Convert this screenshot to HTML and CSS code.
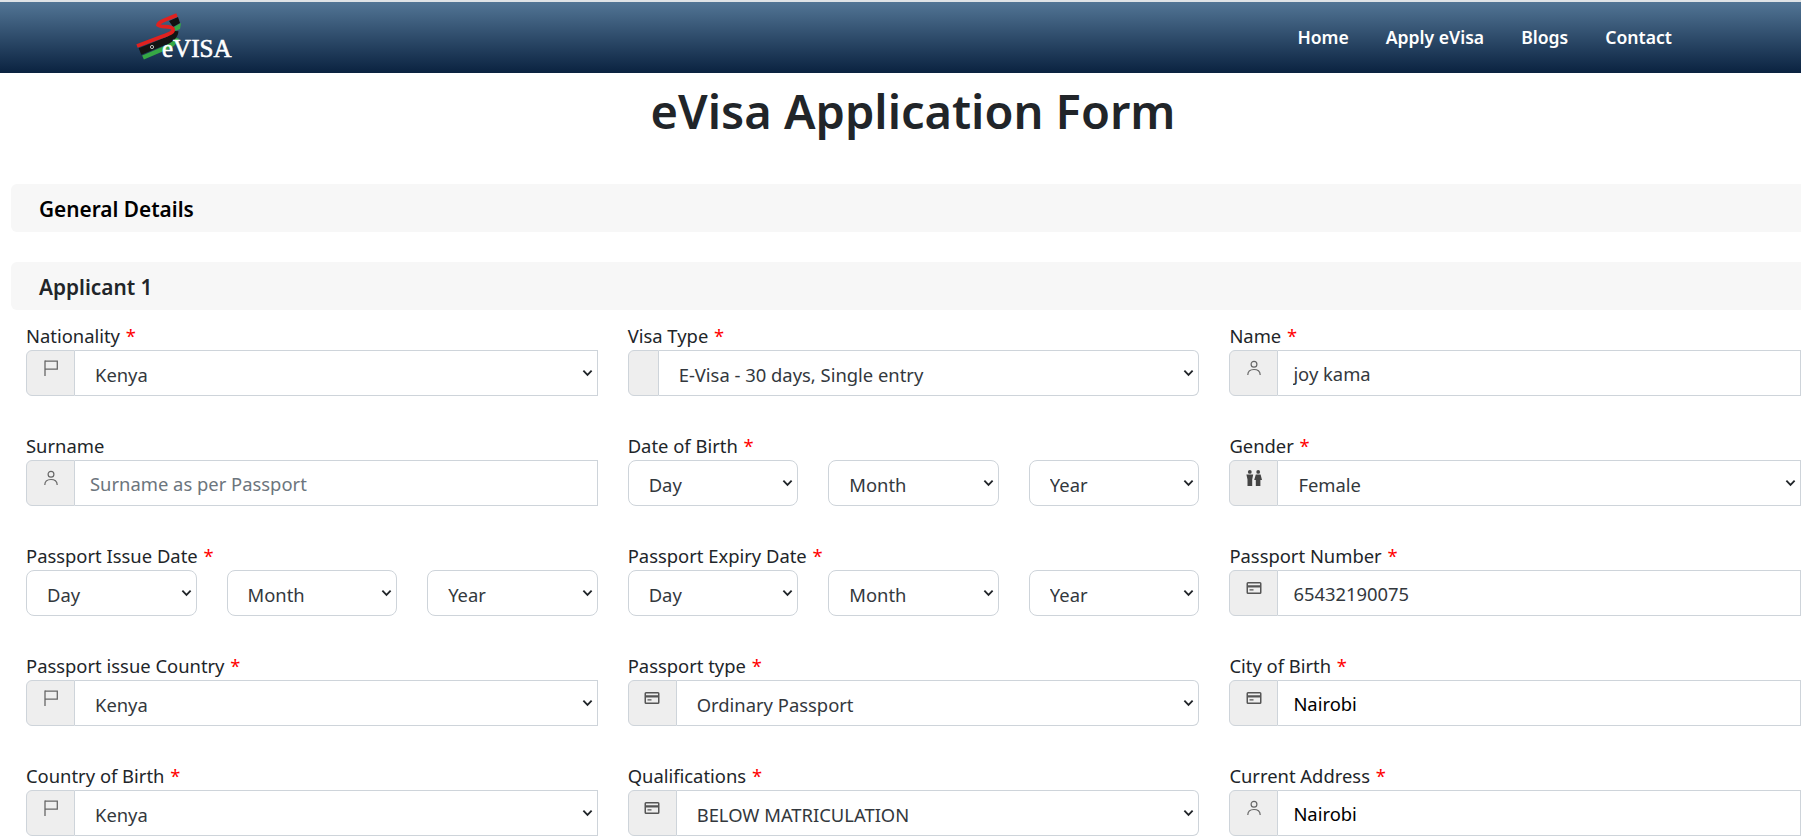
FILE: index.html
```html
<!DOCTYPE html>
<html lang="en">
<head>
<meta charset="utf-8">
<title>eVisa Application Form</title>
<link rel="stylesheet" href="styles.css">
</head>
<body>
<svg class="sprites" width="0" height="0" aria-hidden="true">
  <symbol id="i-flag" viewBox="0 0 16 16"><path d="M2 .5v15.500" fill="none" stroke="#666" stroke-width="1.300"/><path d="M2 1.200h12.300v8h-12.300" fill="none" stroke="#666" stroke-width="1.300"/></symbol>
  <symbol id="i-person" viewBox="0 0 16 16"><circle cx="8" cy="4.200" r="2.900" fill="none" stroke="#666" stroke-width="1.200"/><path d="M1.800 15c0-3.800 2.600-5.500 6.200-5.500s6.200 1.700 6.200 5.500" fill="none" stroke="#666" stroke-width="1.200"/></symbol>
  <symbol id="i-card" viewBox="0 0 16 16"><path fill-rule="evenodd" fill="#555" d="M2 2h12a1.500 1.500 0 0 1 1.500 1.500v9A1.500 1.500 0 0 1 14 14H2a1.500 1.500 0 0 1-1.500-1.500v-9A1.500 1.500 0 0 1 2 2zm0 1.600v1.600h12V3.600zm0 4v4.800h12V7.600zm1.500 1.700h4v1.200h-4z"/></symbol>
  <symbol id="i-gender" viewBox="0 0 16 16"><g fill="#444"><circle cx="3.800" cy="1.900" r="1.900"/><circle cx="12.200" cy="1.900" r="1.900"/><path d="M.4 4.500h6.800L6.200 9.500V16H1.500V9.500z"/><path d="M9.800 4.500h4.800L16 10h-1.600v6H9.800v-6H8.200z"/></g></symbol>
</svg>

<header class="navbar">
  <a class="brand" href="#" aria-label="eVISA">
    <svg class="logo" viewBox="0 0 125 60" width="125" height="60">
      <path d="M54 22l7-4-1 6-5 2z" fill="#36a845"/>
      <path d="M49 16l9-4 2 6-7 4z" fill="#111"/>
      <path d="M23 52.500L43 44C51 41 55.500 38 57 33" fill="none" stroke="#36a845" stroke-width="4.500"/>
      <path d="M20 46.500L42 37.500C50 35 54.500 32 55 26" fill="none" stroke="#141414" stroke-width="7"/>
      <path d="M17 41L42 31.500C50 29 54 27 53 24C51 20 41 23 38 20C38 17 47 14 57 10" fill="none" stroke="#e0211f" stroke-width="3.800"/>
      <circle cx="32" cy="42" r="1.600" fill="none" stroke="#fff" stroke-width=".7"/>
      <text class="logo-text" x="42" y="52">eVISA</text>
    </svg>
  </a>
  <nav class="nav-links">
    <a href="#">Home</a>
    <a href="#">Apply eVisa</a>
    <a href="#">Blogs</a>
    <a href="#">Contact</a>
  </nav>
</header>

<main class="page">
  <h1 class="title">eVisa Application Form</h1>

  <h2 class="section section-general">General Details</h2>
  <h2 class="section section-applicant">Applicant 1</h2>

  <form class="form-grid">
    <div class="field">
      <label class="label">Nationality <span class="req">*</span></label>
      <div class="group group-square"><span class="addon"><svg class="icon"><use href="#i-flag"/></svg></span><select class="select"><option>Kenya</option></select></div>
    </div>
    <div class="field">
      <label class="label">Visa Type <span class="req">*</span></label>
      <div class="group"><span class="addon addon-empty"></span><select class="select"><option>E-Visa - 30 days, Single entry</option></select></div>
    </div>
    <div class="field">
      <label class="label">Name <span class="req">*</span></label>
      <div class="group group-input group-square"><span class="addon"><svg class="icon"><use href="#i-person"/></svg></span><input class="input" value="joy kama"></div>
    </div>

    <div class="field">
      <label class="label">Surname</label>
      <div class="group group-input group-square"><span class="addon"><svg class="icon"><use href="#i-person"/></svg></span><input class="input" placeholder="Surname as per Passport"></div>
    </div>
    <div class="field">
      <label class="label">Date of Birth <span class="req">*</span></label>
      <div class="dates"><select class="select solo"><option>Day</option></select><select class="select solo"><option>Month</option></select><select class="select solo"><option>Year</option></select></div>
    </div>
    <div class="field">
      <label class="label">Gender <span class="req">*</span></label>
      <div class="group group-square"><span class="addon"><svg class="icon"><use href="#i-gender"/></svg></span><select class="select"><option>Female</option></select></div>
    </div>

    <div class="field">
      <label class="label">Passport Issue Date <span class="req">*</span></label>
      <div class="dates"><select class="select solo"><option>Day</option></select><select class="select solo"><option>Month</option></select><select class="select solo"><option>Year</option></select></div>
    </div>
    <div class="field">
      <label class="label">Passport Expiry Date <span class="req">*</span></label>
      <div class="dates"><select class="select solo"><option>Day</option></select><select class="select solo"><option>Month</option></select><select class="select solo"><option>Year</option></select></div>
    </div>
    <div class="field">
      <label class="label">Passport Number <span class="req">*</span></label>
      <div class="group group-input group-square"><span class="addon"><svg class="icon"><use href="#i-card"/></svg></span><input class="input" value="65432190075"></div>
    </div>

    <div class="field">
      <label class="label">Passport issue Country <span class="req">*</span></label>
      <div class="group group-square"><span class="addon"><svg class="icon"><use href="#i-flag"/></svg></span><select class="select"><option>Kenya</option></select></div>
    </div>
    <div class="field">
      <label class="label">Passport type <span class="req">*</span></label>
      <div class="group"><span class="addon"><svg class="icon"><use href="#i-card"/></svg></span><select class="select"><option>Ordinary Passport</option></select></div>
    </div>
    <div class="field">
      <label class="label">City of Birth <span class="req">*</span></label>
      <div class="group group-input group-square"><span class="addon"><svg class="icon"><use href="#i-card"/></svg></span><input class="input input-dark" value="Nairobi"></div>
    </div>

    <div class="field">
      <label class="label">Country of Birth <span class="req">*</span></label>
      <div class="group group-square"><span class="addon"><svg class="icon"><use href="#i-flag"/></svg></span><select class="select"><option>Kenya</option></select></div>
    </div>
    <div class="field">
      <label class="label">Qualifications <span class="req">*</span></label>
      <div class="group"><span class="addon"><svg class="icon"><use href="#i-card"/></svg></span><select class="select"><option>BELOW MATRICULATION</option></select></div>
    </div>
    <div class="field">
      <label class="label">Current Address <span class="req">*</span></label>
      <div class="group group-input group-square"><span class="addon"><svg class="icon"><use href="#i-person"/></svg></span><input class="input input-dark" value="Nairobi"></div>
    </div>
  </form>
</main>
</body>
</html>
```

FILE: styles.css
```css
* { box-sizing: border-box; }
html, body { margin: 0; height: 836px; overflow: hidden; background: #fff; }
body { font-family: "Noto Sans", "Open Sans", sans-serif; font-size: 18.4px; color: #212529; }
.sprites { display: block; height: 0; }

.navbar {
  margin-top: 2px;
  height: 71px;
  display: flex;
  align-items: center;
  justify-content: space-between;
  padding-left: 120px;
  padding-right: 129px;
  background: linear-gradient(#527595, #0a2240);
  box-shadow: 0 -2px 0 #dfe3e6;
}
.brand { display: block; height: 60px; align-self: flex-start; padding-top: 3px; }
.logo { display: block; }
.logo-text { font-family: "Liberation Serif", serif; font-size: 25px; font-weight: 400; fill: #fff; stroke: #fff; stroke-width: .6px; }
.nav-links { display: flex; gap: 37px; margin-top: -1px; }
.nav-links a { color: #fff; text-decoration: none; font-weight: 600; font-size: 17.600px; }

.title { margin: 9px 0 0; font-size: 47px; font-weight: 600; line-height: 58px; text-align: center; width: 1826px; }

.section {
  margin: 0 0 0 11px;
  width: 1800px;
  height: 48px;
  padding-left: 28px;
  background: #f7f7f7;
  border-radius: 6px;
  font-size: 20.800px;
  font-weight: 600;
  line-height: 50px;
}
.section-general { margin-top: 44px; color: #000; }
.section-applicant { margin-top: 30px; color: #212529; }

.form-grid {
  display: grid;
  grid-template-columns: repeat(3, 571.7px);
  grid-auto-rows: 70px;
  column-gap: 30px;
  row-gap: 40px;
  margin: 16px 0 0 26px;
}
.field { display: flex; flex-direction: column; min-width: 0; }
.label { display: block; height: 24px; line-height: 20px; font-size: 18.400px; }
.req { color: #f00; margin-left: 1px; }

.group { display: flex; height: 46px; }
.group-input { height: 47px; }
.addon {
  flex: none;
  width: 49px;
  display: flex;
  justify-content: center;
  padding-top: 9px;
  background: #eee;
  border: 1px solid #ced4da;
  border-radius: 6px 0 0 6px;
}
.addon-empty { width: 31px; }
.icon { width: 16px; height: 16px; display: block; }

.select, .input {
  min-width: 0;
  flex: 1;
  height: 100%;
  border: 1px solid #ced4da;
  border-left: 0;
  background-color: #fff;
  font-family: inherit;
  font-size: 18.400px;
  color: #33383d;
  outline: 0;
  border-radius: 0 6px 6px 0;
  margin: 0;
}
.select {
  appearance: none;
  -webkit-appearance: none;
  padding: 2px 30px 0 20px;
  background-image: url("data:image/svg+xml,%3Csvg xmlns='http://www.w3.org/2000/svg' viewBox='0 0 12 8'%3E%3Cpath d='M1.500 1.500 6 6l4.500-4.500' fill='none' stroke='%23212529' stroke-width='2'/%3E%3C/svg%3E");
  background-repeat: no-repeat;
  background-position: right 4px center;
  background-size: 11px 8px;
}
.group-square .select, .group-square .input { border-radius: 0; }
.input { padding: 2px 15px 0; }
.input::placeholder { color: #6c757d; opacity: 1; }
.input-dark { color: #000; }

.dates { display: grid; grid-template-columns: repeat(3, 1fr); column-gap: 30px; height: 46px; }
.select.solo { border-left: 1px solid #ced4da; border-radius: 8px; }
```
